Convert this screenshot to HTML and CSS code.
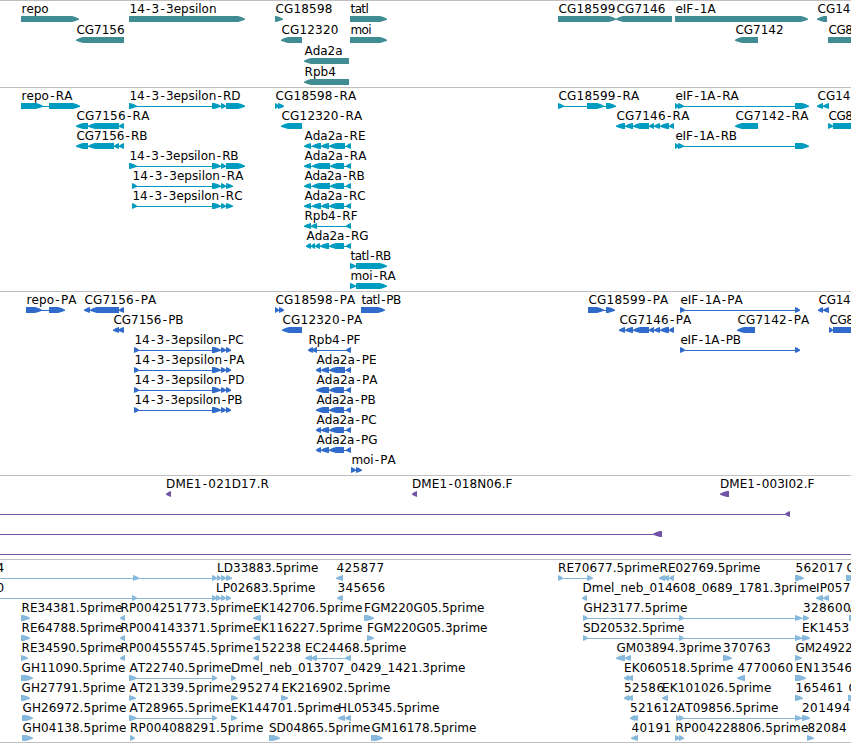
FILE: index.html
```
<!DOCTYPE html>
<html lang="en">
<head>
    <meta charset="UTF-8">
    <meta name="viewport" content="width=device-width, initial-scale=1.0">
    <title>Genome Tracks</title>
    <link rel="stylesheet" href="styles.css">
</head>
<body>
    <main class="browser">
        <section class="track genes"><svg class="features" id="genes"></svg></section>
        <section class="track transcripts"><svg class="features" id="transcripts"></svg></section>
        <section class="track proteins"><svg class="features" id="proteins"></svg></section>
        <section class="track bacs"><svg class="features" id="bacs"></svg></section>
        <section class="track ests"><svg class="features" id="ests"></svg></section>
    </main>
    <script src="tracks.js"></script>
</body>
</html>
```
FILE: styles.css
```
body {
    margin: 0;
    background-color: #ffffff;
    color: #000000;
    font-family: "DejaVu Sans", sans-serif;
    font-size: 12px;
}

.browser {
    display: flex;
    flex-direction: column;
    width: 851px;
    overflow: hidden;
    border-bottom: 1px solid #c0c0c0;
}

.track {
    box-sizing: border-box;
    border-top: 1px solid #c0c0c0;
    overflow: hidden;
}

.features {
    display: block;
    width: 100%;
    height: 100%;
}

.label {
    fill: #000000;
}

.exon,
.intron {
    fill: currentColor;
}

.intron {
    shape-rendering: crispEdges;
}

.genes {
    height: 87px;
    color: #408c93;
}

.transcripts {
    height: 204px;
    color: #009cbf;
}

.proteins {
    height: 184px;
    color: #306acb;
}

.bacs {
    height: 84px;
    color: #7253a5;
}

.ests {
    height: 183px;
    color: #86b9dc;
}
```
FILE: tracks.js
```
// feature: [row, strand, label, label start, label end, exons]
const eps5 = [[129, 137], [212, 221], [221, 226], [226, 245]];
const epsShort = [[132, 137], [212, 221], [221, 226], [226, 233]];
const epsCds = [[134, 139], [212, 221], [221, 226], [226, 231]];
const cg7146 = [[625, 633], [633, 649], [649, 654], [654, 660], [660, 669], [669, 674]];
const eifRna = [[675, 679], [678, 684], [795, 809]];
const eifCds = [[680, 685], [795, 800]];

const genes = [
    [0, '+', 'repo', 21, 48, [[21, 79]]],
    [1, '-', 'CG7156', 76, 124, [[76, 124]]],
    [0, '+', '14-3-3epsilon', 129, 216, [[129, 245]]],
    [0, '+', 'CG18598', 275, 332, [[275, 283]]],
    [0, '+', 'tatl', 350, 368, [[350, 387]]],
    [1, '-', 'CG12320', 281, 338, [[281, 302]]],
    [1, '+', 'moi', 350, 371, [[350, 387]]],
    [2, '-', 'Ada2a', 304, 342, [[304, 349]]],
    [3, '-', 'Rpb4', 304, 335.5, [[304, 349]]],
    [0, '+', 'CG18599', 558, 615, [[558, 616]]],
    [0, '-', 'CG7146', 616, 665, [[616, 672]]],
    [0, '+', 'eIF-1A', 675, 715, [[675, 808]]],
    [1, '-', 'CG7142', 735, 783, [[735, 758]]],
    [0, '-', 'CG14', 817, 850, [[817, 827]]],
    [1, '+', 'CG8', 828, 852, [[828, 870]]]
];

const transcripts = [
    [0, '+', 'repo-RA', 21, 72, [[21, 43], [49, 80]]],
    [0, '+', '14-3-3epsilon-RD', 129, 240, eps5],
    [0, '+', 'CG18598-RA', 275, 356, [[275, 279], [278, 284]]],
    [0, '+', 'CG18599-RA', 558, 639, [[558, 564], [587, 604], [606, 616]]],
    [0, '+', 'eIF-1A-RA', 675, 738, eifRna],
    [0, '-', 'CG14', 817, 850, [[817, 823], [823, 829]]],
    [1, '-', 'CG7156-RA', 76, 149, [[76, 88], [88, 119], [119, 124]]],
    [1, '-', 'CG12320-RA', 281, 362, [[281, 302]]],
    [1, '-', 'CG7146-RA', 616, 689, [[616, 625], ...cg7146]],
    [1, '-', 'CG7142-RA', 735, 808, [[735, 758]]],
    [1, '+', 'CG8', 828, 852, [[828, 833], [833, 870]]],
    [2, '-', 'CG7156-RB', 76, 147, [[76, 88], [88, 114], [114, 119], [119, 124]]],
    [2, '-', 'Ada2a-RE', 304, 365, [[304, 311], [312, 321], [321, 329], [329, 345], [346, 351]]],
    [2, '+', 'eIF-1A-RB', 675, 736, eifRna],
    [3, '+', '14-3-3epsilon-RB', 129, 238, eps5],
    [3, '-', 'Ada2a-RA', 304, 366, [[304, 311], [312, 330], [330, 344], [346, 351]]],
    [4, '+', '14-3-3epsilon-RA', 132, 243, epsShort],
    [4, '-', 'Ada2a-RB', 304, 364, [[304, 311], [312, 330], [330, 344], [346, 351]]],
    [5, '+', '14-3-3epsilon-RC', 132, 242, epsShort],
    [5, '-', 'Ada2a-RC', 304, 365, [[304, 311], [312, 321], [321, 329], [329, 344], [346, 351]]],
    [6, '-', 'Rpb4-RF', 304, 357, [[304, 311], [311, 317], [346, 351]]],
    [7, '-', 'Ada2a-RG', 306, 368, [[306, 311], [311, 315], [315, 320], [320, 329], [329, 344], [346, 351]]],
    [8, '+', 'tatl-RB', 350, 390, [[350, 356], [356, 387]]],
    [9, '+', 'moi-RA', 350, 395, [[350, 356], [356, 387]]]
];

const proteins = [
    [0, '+', 'repo-PA', 26, 76, [[26, 42], [49, 65]]],
    [0, '-', 'CG7156-PA', 84, 156, [[84, 90], [90, 119], [119, 124]]],
    [0, '+', 'CG18598-PA', 275, 355, [[275, 279], [279, 284]]],
    [0, '+', 'tatl-PB', 361, 400, [[361, 385]]],
    [0, '+', 'CG18599-PA', 588, 668, [[588, 604], [606, 615]]],
    [0, '+', 'eIF-1A-PA', 680, 742, eifCds],
    [0, '-', 'CG14', 818, 850, [[818, 823], [823, 829]]],
    [1, '-', 'CG7156-PB', 113, 183, [[113, 119], [118, 124]]],
    [1, '-', 'CG12320-PA', 282, 362, [[282, 302]]],
    [1, '-', 'CG7146-PA', 619, 691, [[619, 625], ...cg7146]],
    [1, '-', 'CG7142-PA', 737, 809, [[737, 755]]],
    [1, '+', 'CG8', 829, 853, [[829, 833], [833, 870]]],
    [2, '+', '14-3-3epsilon-PC', 134, 243, epsCds],
    [2, '-', 'Rpb4-PF', 308, 360, [[308, 313], [312, 317], [346, 351]]],
    [2, '+', 'eIF-1A-PB', 680, 740, eifCds],
    [3, '+', '14-3-3epsilon-PA', 134, 244, epsCds],
    [3, '-', 'Ada2a-PE', 316, 376, [[316, 321], [321, 329], [329, 345], [346, 351]]],
    [4, '+', '14-3-3epsilon-PD', 134, 244, epsCds],
    [4, '-', 'Ada2a-PA', 316, 377, [[316, 329], [329, 344], [346, 351]]],
    [5, '+', '14-3-3epsilon-PB', 134, 242, epsCds],
    [5, '-', 'Ada2a-PB', 316, 375, [[316, 329], [329, 344], [346, 351]]],
    [6, '-', 'Ada2a-PC', 316, 376, [[316, 321], [321, 329], [329, 344], [346, 351]]],
    [7, '-', 'Ada2a-PG', 316, 377, [[316, 321], [321, 329], [329, 344], [346, 351]]],
    [8, '+', 'moi-PA', 351, 395, [[351, 356], [356, 362]]]
];

// features without a label start left of the visible region
const bacs = [
    [0, '-', 'DME1-021D17.R', 165.5, 268.5, [[166, 171]]],
    [0, '-', 'DME1-018N06.F', 411.5, 512, [[412, 417]]],
    [0, '-', 'DME1-003I02.F', 719.5, 814, [[720, 729]]],
    [1, '-', '', 0, 0, [[-20, -10], [785, 790]]],
    [2, '-', '', 0, 0, [[-20, -10], [653, 662]]],
    [3, '-', '', 0, 0, [[-20, -10], [870, 880]]]
];

const ests = [
    [0, '+', '4', -4, 4.5, [[-20, -10], [133, 139], [212, 217]]],
    [0, '+', 'LD33883.5prime', 216.5, 318, [[217, 221], [221, 226], [226, 232]]],
    [0, '-', '425877', 336, 384, [[336, 343]]],
    [0, '+', 'RE70677.5prime', 557.5, 659, [[558, 563], [587, 593]]],
    [0, '-', 'RE02769.5prime', 659, 760, [[659, 665], [663, 669], [669, 674]]],
    [0, '+', '562017', 795, 843, [[795, 804]]],
    [0, '+', 'C', 846, 855, [[846, 856]]],
    [1, '+', '0', -4, 4.5, [[-20, -10], [132, 137], [212, 217]]],
    [1, '+', 'LP02683.5prime', 215.5, 315, [[216, 221], [221, 226], [226, 231]]],
    [1, '-', '345656', 337, 385, [[337, 343]]],
    [1, '-', 'Dmel_neb_014608_0689_1781.3prime', 582, 816, [[582, 587]]],
    [1, '-', 'IP057', 815.5, 850, [[816, 823], [823, 829]]],
    [2, '+', 'RE34381.5prime', 21, 122, [[21, 30]]],
    [2, '-', 'RP004251773.5prime', 120, 253, [[120, 125]]],
    [2, '-', 'EK142706.5prime', 252.5, 362, [[253, 261]]],
    [2, '+', 'FGM220G05.5prime', 363.5, 484, [[364, 374]]],
    [2, '+', 'GH23177.5prime', 583, 687, [[583, 588], [679, 684], [795, 802], [803, 809]]],
    [2, '+', '328600', 802.5, 850.5, []],
    [2, '+', 'A', 849, 857, [[849, 858]]],
    [3, '+', 'RE64788.5prime', 21, 122, [[21, 30]]],
    [3, '-', 'RP004143371.5prime', 120, 253, [[120, 125]]],
    [3, '-', 'EK116227.5prime', 252.5, 362, [[253, 260]]],
    [3, '+', 'FGM220G05.3prime', 366.5, 487, [[367, 374]]],
    [3, '+', 'SD20532.5prime', 582.5, 684, [[583, 588], [679, 684], [795, 802], [802, 810]]],
    [3, '+', 'EK1453', 801.5, 849, []],
    [4, '+', 'RE34590.5prime', 21, 122, [[21, 28]]],
    [4, '-', 'RP004555745.5prime', 120, 253, [[120, 125]]],
    [4, '-', '152238', 253, 301, [[253, 259]]],
    [4, '-', 'EC24468.5prime', 304.5, 406, [[305, 312], [311, 317], [345, 351]]],
    [4, '-', 'GM03894.3prime', 616, 721, [[616, 625], [625, 631]]],
    [4, '+', '370763', 722.5, 770.5, [[723, 732]]],
    [4, '+', 'GM24922', 795, 852, [[795, 802]]],
    [5, '+', 'GH11090.5prime', 21, 125, [[21, 33]]],
    [5, '+', 'AT22740.5prime', 129, 231, [[129, 137], [212, 217]]],
    [5, '+', 'Dmel_neb_013707_0429_1421.3prime', 230.5, 465, [[231, 236]]],
    [5, '-', 'EK060518.5prime', 623.5, 733, [[624, 629], [627, 633]]],
    [5, '-', '4770060', 737, 793, [[737, 745]]],
    [5, '+', 'EN13546', 795, 852, [[795, 806]]],
    [6, '+', 'GH27791.5prime', 21, 125, [[21, 30]]],
    [6, '+', 'AT21339.5prime', 129, 231, [[129, 136]]],
    [6, '+', '295274', 230.5, 279, [[231, 238]]],
    [6, '+', 'EK216902.5prime', 281, 390, [[281, 288]]],
    [6, '-', '52586', 623.5, 664, [[624, 629], [627, 633]]],
    [6, '-', 'EK101026.5prime', 661.5, 771, [[662, 668]]],
    [6, '+', '165461', 795, 843, [[795, 803]]],
    [6, '+', 'C', 848, 857, [[848, 858]]],
    [7, '+', 'GH26972.5prime', 22, 126, [[22, 33]]],
    [7, '+', 'AT28965.5prime', 129, 231, [[129, 137], [212, 217]]],
    [7, '+', 'EK144701.5prime', 230.5, 340, [[231, 237]]],
    [7, '-', 'HL05345.5prime', 337.5, 439, [[338, 345], [345, 351]]],
    [7, '-', '521612', 629.5, 677, [[630, 635], [632, 638]]],
    [7, '+', 'AT09856.5prime', 676.5, 778, [[676, 680], [679, 684], [795, 802], [802, 810]]],
    [7, '+', '201494', 801.5, 850, []],
    [8, '+', 'GH04138.5prime', 22, 126, [[22, 33]]],
    [8, '+', 'RP004088291.5prime', 129.5, 263, [[130, 135]]],
    [8, '+', 'SD04865.5prime', 268.5, 370, [[269, 280]]],
    [8, '+', 'GM16178.5prime', 371, 476, [[371, 383]]],
    [8, '-', '40191', 631, 671, [[631, 638]]],
    [8, '+', 'RP004228806.5prime', 675, 808, [[675, 680], [679, 684]]],
    [8, '+', '82084', 807, 846.5, [[807, 814]]]
];

const measure = document.createElement('canvas').getContext('2d');
measure.font = '12px "DejaVu Sans"';

function add(svg, tag, attrs) {
    const el = document.createElementNS('http://www.w3.org/2000/svg', tag);
    for (const key in attrs) el.setAttribute(key, attrs[key]);
    svg.appendChild(el);
    return el;
}

// rounded shoulders, so the arrow head stays heavy up to the point
function exonPoints(start, end, strand, y) {
    const tip = Math.min(end - start, 7);
    const dir = strand === '+' ? -1 : 1;
    const point = strand === '+' ? end : start;
    const tail = strand === '+' ? start : end;
    return [
        [tail, y],
        [point + dir * tip, y],
        [point + dir * tip * 0.5, y + 1],
        [point, y + 2.7],
        [point, y + 3.7],
        [point + dir * tip * 0.5, y + 5],
        [point + dir * tip, y + 6],
        [tail, y + 6]
    ].map(p => p.join(',')).join(' ');
}

// one x per character, hyphens get a full character cell
function letterPositions(name, x1, x2) {
    const widths = [...name].map(c => c === '-' ? 6.8 : measure.measureText(c).width);
    const total = widths.reduce((a, b) => a + b, 0);
    const scale = (x2 - x1) / total;
    let x = x1 + 0.5;
    return widths.map((w, i) => {
        const pad = name[i] === '-' ? 1.3 : 0;
        const pos = x + pad;
        x += w * scale;
        return pos.toFixed(2);
    }).join(' ');
}

function drawTrack(id, features, rowHeight) {
    const svg = document.getElementById(id);
    features.forEach(([row, strand, name, x1, x2, exons]) => {
        const top = row * rowHeight;
        if (exons.length > 1) {
            const left = exons[0][0];
            const right = exons[exons.length - 1][1];
            add(svg, 'rect', { class: 'intron', x: left, y: top + 18, width: right - left, height: 1 });
        }
        exons.forEach(([start, end]) => {
            add(svg, 'polygon', { class: 'exon', points: exonPoints(start, end, strand, top + 15) });
        });
        if (name) {
            const label = add(svg, 'text', { class: 'label', x: letterPositions(name, x1, x2), y: top + 12 });
            label.textContent = name;
        }
    });
}

drawTrack('genes', genes, 21);
drawTrack('transcripts', transcripts, 20);
drawTrack('proteins', proteins, 20);
drawTrack('bacs', bacs, 20);
drawTrack('ests', ests, 20);
```
